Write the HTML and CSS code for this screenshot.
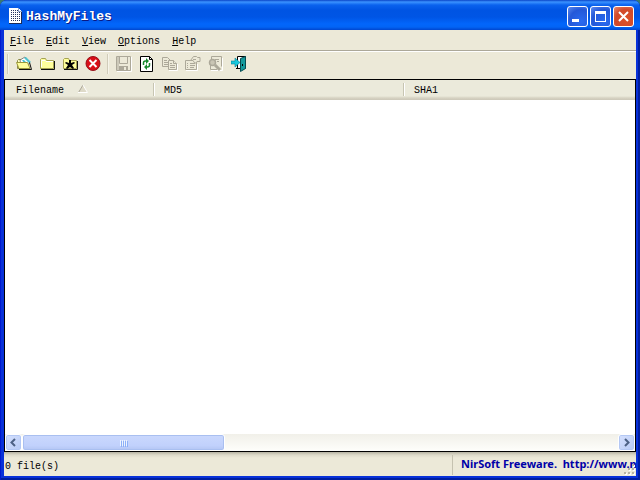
FILE: index.html
```html
<!DOCTYPE html>
<html lang="en">
    <head>
        <meta charset="utf-8">
        <title>HashMyFiles</title>
        <link rel="stylesheet" href="styles.css">
    </head>
    <body>
        <div class="window">
            <header class="titlebar">
                <svg class="app-icon" width="14" height="16" viewBox="0 0 14 16" shape-rendering="crispEdges">
                    <path fill="#fff" d="M1 0h9l3 3v12H1z"/>
                    <path stroke="#26345c" stroke-dasharray="1 1" d="M3 2.5h7M3 4.5h9M3 6.5h9M3 8.5h9M3 10.5h9M3 12.5h9"/>
                    <path fill="#1b2b57" d="M1 15h12v1H1zM13 4h1v12h-1z"/>
                    <path fill="#8ea4ce" d="M10 0h1v3h3v1h-4z"/>
                </svg>
                <h1>HashMyFiles</h1>
                <div class="caption">
                    <button class="cap" aria-label="Minimize">
                        <svg width="19" height="19" viewBox="0 0 19 19"><path fill="#fff" d="M4 12h7v3H4z"/></svg>
                    </button>
                    <button class="cap" aria-label="Maximize">
                        <svg width="19" height="19" viewBox="0 0 19 19"><path fill="#fff" fill-rule="evenodd" d="M4 4h11v11H4zM5 7v7h9V7z"/></svg>
                    </button>
                    <button class="cap cap-close" aria-label="Close">
                        <svg width="19" height="19" viewBox="0 0 19 19"><path stroke="#fff" stroke-width="2" d="M5 5l9 9M14 5l-9 9"/></svg>
                    </button>
                </div>
            </header>

            <nav class="menu">
                <a href="#"><u>F</u>ile</a>
                <a href="#"><u>E</u>dit</a>
                <a href="#"><u>V</u>iew</a>
                <a href="#"><u>O</u>ptions</a>
                <a href="#"><u>H</u>elp</a>
            </nav>

            <div class="toolbar">
                <span class="sep"></span>
                <button class="tool" aria-label="Add files">
                    <svg width="16" height="16" viewBox="0 0 16 16">
                        <path fill="#ffffc0" stroke="#8c8a4a" d="M1.5 12.5v-8l1-1h3l1 1h6v8z"/>
                        <path fill="#fff" stroke="#555" stroke-width=".7" d="M4 4l5-3 5 5-2 3H5z"/>
                        <path fill="#4cc4cf" d="M8 2l2-1 5 5-2 1zM6 4h2l3 3H8z"/>
                        <path fill="#ffff9c" stroke="#9c9a3c" d="M.5 6.500h11l2.500 6h-11z"/>
                        <path fill="none" stroke="#111" d="M3 13.500h12.500l-2-7"/>
                    </svg>
                </button>
                <button class="tool" aria-label="Add folder">
                    <svg width="16" height="16" viewBox="0 0 16 16">
                        <path fill="#ffff9c" stroke="#a5a252" d="M1.500 12.500v-9l1-1h4l1 2h7v8z"/>
                        <path fill="none" stroke="#fff" d="M2.500 11V4.500h3.500l1 1h7"/>
                        <path fill="none" stroke="#111" d="M2 13.500h13.500V5"/>
                    </svg>
                </button>
                <button class="tool" aria-label="Add by wildcard">
                    <svg width="16" height="16" viewBox="0 0 16 16">
                        <path fill="#ffff9c" stroke="#a5a252" d="M1.500 12.500v-9l1-1h4l1 2h7v8z"/>
                        <path fill="none" stroke="#111" d="M2 13.500h13.500V5"/>
                        <path fill="#000" d="M7 4h2v3l3-1 1 1-3 2 2 3-1 1-3-2-3 2-1-1 2-3-3-2 1-1 3 1z"/>
                    </svg>
                </button>
                <button class="tool" aria-label="Stop">
                    <svg width="16" height="16" viewBox="0 0 16 16">
                        <circle cx="8" cy="7.500" r="7" fill="#d80f18" stroke="#96121a"/>
                        <path stroke="#fff" stroke-width="2" d="M4.500 4l7 7M11.500 4l-7 7"/>
                    </svg>
                </button>
                <span class="sep"></span>
                <button class="tool" aria-label="Save" disabled>
                    <svg width="16" height="16" viewBox="0 0 16 16" fill="none" stroke="#aca899">
                        <path stroke="#fff" d="M1 15.500h14.500V1"/>
                        <path d="M.5.500h14v14H.5zM3.500 1v6.500h8V1M2 1v13"/>
                        <path fill="#aca899" stroke="none" d="M3 10h9v4h-2v-3H8v3H3z"/>
                    </svg>
                </button>
                <button class="tool" aria-label="Refresh">
                    <svg width="16" height="16" viewBox="0 0 16 16">
                        <path fill="#fff" stroke="#000" d="M1.500.5h9l3 3v12h-12z"/>
                        <path fill="none" stroke="#000" d="M10.500.5v3h3"/>
                        <path fill="none" stroke="#168a2c" stroke-width="1.500" d="M4.500 9V7q0-2 2-2H8M10.500 7v2q0 2-2 2H7"/>
                        <path fill="#168a2c" d="M7 2l3 3-3 3zM8 8v6l-3-3z"/>
                    </svg>
                </button>
                <button class="tool" aria-label="Copy" disabled>
                    <svg width="16" height="16" viewBox="0 0 16 16" fill="#ece9d8" stroke="#aca899">
                        <path stroke="#fff" fill="none" d="M7 14.500h8.500V8"/>
                        <path d="M.5 1.500h5l3 3v6h-8z"/>
                        <path d="M2 4.500h3M2 6.500h4M2 8.500h4"/>
                        <path d="M6.500 4.500h5l3 3v6h-8z"/>
                        <path d="M11.500 4.500v3h3M8 7.500h2M8 9.500h5M8 11.500h5"/>
                    </svg>
                </button>
                <button class="tool" aria-label="Properties" disabled>
                    <svg width="16" height="16" viewBox="0 0 16 16" fill="#ece9d8" stroke="#aca899">
                        <path stroke="#fff" fill="none" d="M1 14.500h11.500V8"/>
                        <path d="M.5 4.500h11v9H.5z"/>
                        <path d="M2 7.500h1M5 7.500h5M2 9.500h1M5 9.500h5M2 11.500h1M5 11.500h4"/>
                        <path d="M5.500 4.500l3-4h3l1 1h2.500v4h-3l-2 2-2-3z"/>
                        <path d="M8 3.500h3"/>
                    </svg>
                </button>
                <button class="tool" aria-label="Find" disabled>
                    <svg width="16" height="16" viewBox="0 0 16 16" fill="none" stroke="#aca899">
                        <path stroke="#fff" d="M3 14.500h11.500V2"/>
                        <path d="M3.500 3V.5h10v10M2.500 9v4.500H9"/>
                        <circle cx="4.500" cy="6.500" r="3" fill="#c9c5b4" stroke-width="1.500"/>
                        <path stroke-width="3" d="M7 9l5 5"/>
                        <path d="M7 3.500h4M9 5.500h2"/>
                    </svg>
                </button>
                <button class="tool" aria-label="Exit">
                    <svg width="16" height="16" viewBox="0 0 16 16">
                        <path fill="#fff" stroke="#000" d="M6.500 12.500V.5h8v12"/>
                        <path fill="#159a9c" stroke="#064b50" d="M9.500 2.500l5-2v12l-5 3z"/>
                        <path fill="#000" d="M5 12h4v1H5zM11 8h1v2h-1z"/>
                        <path fill="#19c7dc" stroke="#087f94" stroke-width=".6" d="M0 5h4V2l5 4.500L4 11V8H0z"/>
                    </svg>
                </button>
            </div>

            <main class="list">
                <table>
                    <thead>
                        <tr>
                            <th class="col-name">Filename
                                <svg width="10" height="8" viewBox="0 0 10 8" fill="none"><path fill="#dedac8" d="M5 0l5 8H0z"/><path stroke="#aca899" d="M5 0L.5 7.500"/><path stroke="#fff" d="M5 0l4.500 7.500H0"/></svg>
                            </th>
                            <th class="col-md5">MD5</th>
                            <th>SHA1</th>
                        </tr>
                    </thead>
                </table>
                <div class="scrollbar">
                    <button class="arrow" aria-label="Scroll left">
                        <svg width="9" height="9" viewBox="0 0 9 9"><path fill="none" stroke="#4d6185" stroke-width="2" d="M6 1L2.500 4.500 6 8"/></svg>
                    </button>
                    <div class="track"><div class="thumb"><i></i><i></i><i></i><i></i></div></div>
                    <button class="arrow" aria-label="Scroll right">
                        <svg width="9" height="9" viewBox="0 0 9 9"><path fill="none" stroke="#4d6185" stroke-width="2" d="M3 1l3.500 3.500L3 8"/></svg>
                    </button>
                </div>
            </main>

            <footer class="status">
                <span class="count">0 file(s)</span>
                <a class="credit" href="#">NirSoft Freeware.&nbsp; http://www.n</a>
                <svg class="resize" width="12" height="12" viewBox="0 0 12 12" shape-rendering="crispEdges">
                    <path fill="#fff" d="M9 1h2v2H9zM5 5h2v2H5zM9 5h2v2H9zM1 9h2v2H1zM5 9h2v2H5zM9 9h2v2H9z"/>
                    <path fill="#b8b4a3" d="M8 0h2v2H8zM4 4h2v2H4zM8 4h2v2H8zM0 8h2v2H0zM4 8h2v2H4zM8 8h2v2H8z"/>
                </svg>
            </footer>
        </div>
    </body>
</html>
```

FILE: styles.css
```css
*{
    box-sizing: border-box;
}
body{
    margin: 0;
    background: #3a7a70;
    font: 10px/12px "Liberation Mono", monospace;
    color: #000;
}
a{
    color: inherit;
    text-decoration: none;
}
button{
    margin: 0;
    padding: 0;
    border: none;
    background: none;
}
svg{
    display: block;
}

.window{
    display: flex;
    flex-direction: column;
    height: 100vh;
    padding: 0 4px 4px;
    border-radius: 7px 7px 0 0;
    background: #0831d9;
    box-shadow: inset 1px 0 #0019cf, inset -2px -2px #001ea0;
    overflow: hidden;
}

/* title bar */
.titlebar{
    display: flex;
    align-items: center;
    height: 30px;
    margin: 0 -4px;
    padding: 2px 6px 0 8px;
    background: linear-gradient(#0a45c8 0, #3b93ff 2px, #0a62ee 5px, #0054e3 10px, #0055e5 17px, #0266fb 24px, #0264f5 27px, #0046cf 30px);
}
.titlebar h1{
    flex: 1;
    margin: 0 0 0 4px;
    padding-top: 2px;
    font-size: 13px;
    line-height: 16px;
    color: #fff;
    text-shadow: 1px 1px #0a1883;
}
.caption{
    display: flex;
    gap: 2px;
}
.cap{
    width: 21px;
    height: 21px;
    border: 1px solid #fff;
    border-radius: 3px;
    background: radial-gradient(circle at 70% 75%, #2a6af0, #2458d8 60%, #5f8cf0);
}
.cap-close{
    background: radial-gradient(circle at 65% 70%, #dc5028, #d1492a 60%, #e88a70);
}

/* menu and toolbar */
.menu{
    display: flex;
    gap: 12px;
    padding: 6px 6px 2px;
    background: #ece9d8;
    border-bottom: 1px solid #aca899;
}
.toolbar{
    display: flex;
    align-items: center;
    height: 28px;
    padding: 0 3px 4px;
    background: #ece9d8;
    border-top: 1px solid #fff;
}
.tool{
    display: grid;
    place-items: center;
    width: 23px;
    height: 22px;
}
.sep{
    width: 2px;
    height: 20px;
    margin-right: 3px;
    background: #d0ccba;
    border-right: 1px solid #f6f4ea;
}
.tool + .sep{
    margin-left: 3px;
}

/* file list */
.list{
    flex: 1;
    display: flex;
    flex-direction: column;
    justify-content: space-between;
    border: 1px solid #000;
    background: #fff;
}
.list table{
    width: 100%;
    table-layout: fixed;
    border-collapse: collapse;
}
.list thead{
    background: linear-gradient(#ebeadb 16px, #d6d2c2 18px, #cbc7b8);
}
.list th{
    height: 20px;
    padding: 2px 9px 0;
    font-weight: normal;
    text-align: left;
    background: linear-gradient(#c7c5b2, #c7c5b2) right 1px top 3px / 1px 13px no-repeat,
        linear-gradient(#fff, #fff) right 0 top 3px / 1px 13px no-repeat;
}
.list th:last-child{
    background: none;
}
.list th svg{
    display: inline-block;
    margin-left: 8px;
}
.list .col-name{
    width: 150px;
    padding-left: 11px;
}
.list .col-md5{
    width: 250px;
}

.scrollbar{
    display: flex;
    height: 17px;
    background: linear-gradient(#f1f0e9, #fefefb);
}
.arrow{
    display: grid;
    place-items: center;
    width: 17px;
    height: 17px;
    border: 1px solid #fff;
    border-radius: 3px;
    background: linear-gradient(135deg, #d6e1fe, #b7caf5);
    box-shadow: inset 0 0 0 1px #b4c8f4;
}
.track{
    flex: 1;
}
.thumb{
    display: flex;
    align-items: center;
    justify-content: center;
    gap: 1px;
    width: 34%;
    height: 17px;
    border: 1px solid #fff;
    border-radius: 3px;
    background: linear-gradient(#cad8fd, #c1d1fc 70%, #b3c5f3);
    box-shadow: inset 0 0 0 1px #a9bff0;
}
.thumb i{
    width: 1px;
    height: 6px;
    background: #eef4fe;
    box-shadow: 1px 1px #8cb0f8;
}

/* status bar */
.status{
    position: relative;
    display: flex;
    align-items: center;
    height: 24px;
    padding: 2px 0 0 1px;
    background: linear-gradient(#b5b2a2, #dedbca 3px, #ece9d8 6px);
}
.count{
    flex: 1;
    padding-top: 3px;
}
.credit{
    width: 184px;
    padding: 2px 0 4px 8px;
    border-left: 1px solid #c5c2b0;
    font: bold 11px/14px "Noto Sans", Arial, sans-serif;
    color: #0000a8;
    white-space: nowrap;
    overflow: hidden;
}
.resize{
    position: absolute;
    right: 0;
    bottom: 0;
}
```
